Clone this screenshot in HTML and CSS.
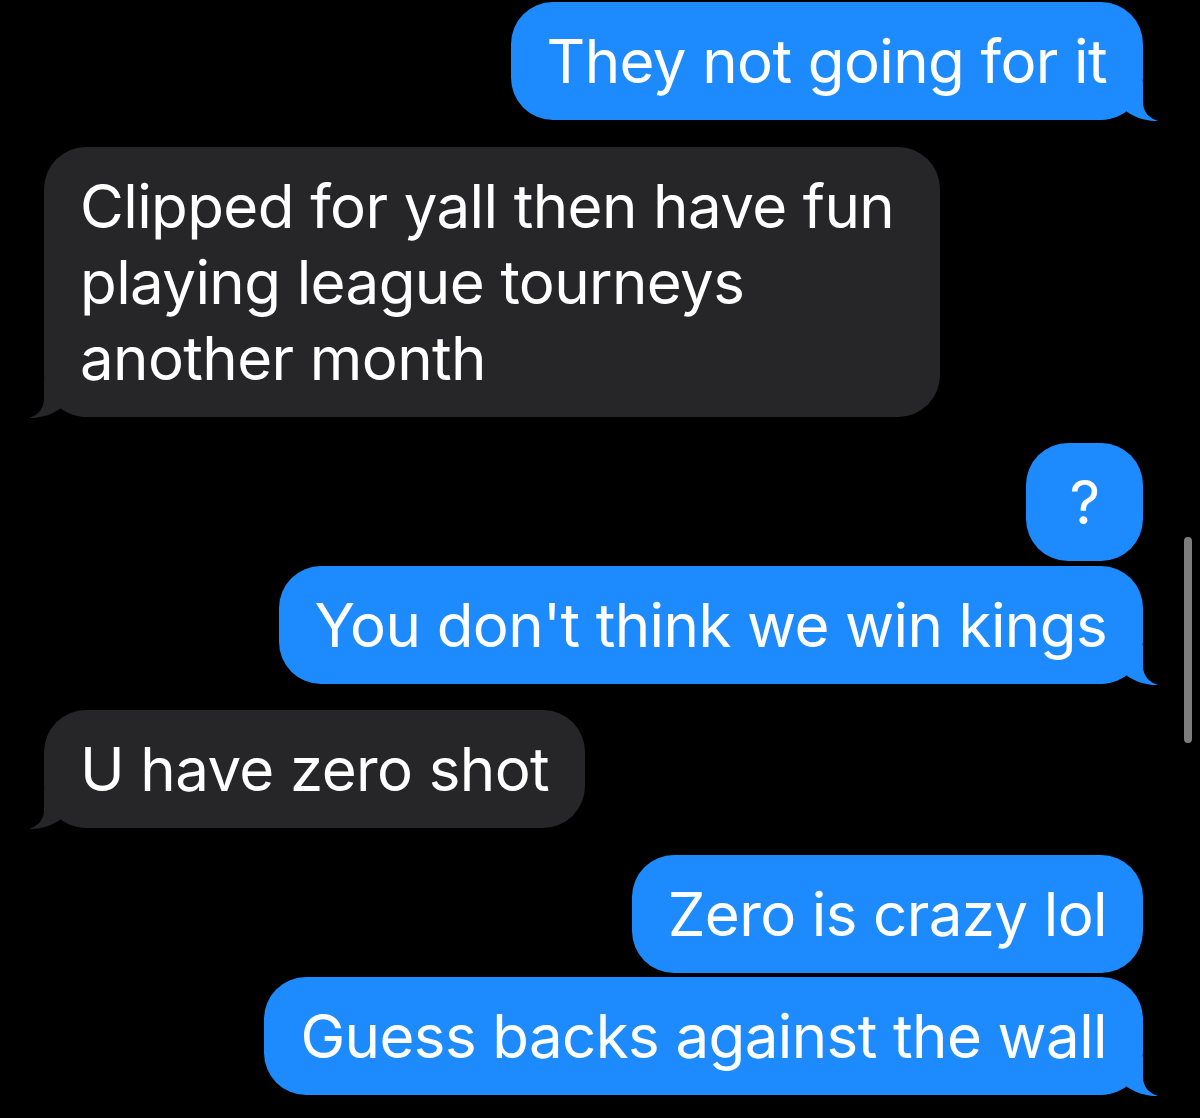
FILE: index.html
```html
<!DOCTYPE html>
<html>
<head>
<meta charset="utf-8">
<link rel="stylesheet" href="styles.css">
</head>
<body>
<div class="thread">
  <div class="row me">
    <div class="bubble">They not going for it<svg class="tail" viewBox="0 0 60 40"><path d="M45 0 L45 21 C45 31 51 37 60 40 C50 40.5 37 37 28 30 C20 36 10 39 0 39 Z"/></svg></div>
  </div>
  <div class="row them">
    <div class="bubble wide">Clipped for yall then have fun playing league tourneys another month<svg class="tail" viewBox="0 0 60 40"><path d="M45 0 L45 21 C45 31 51 37 60 40 C50 40.5 37 37 28 30 C20 36 10 39 0 39 Z"/></svg></div>
  </div>
  <div class="row me">
    <div class="bubble short">?</div>
  </div>
  <div class="row me same">
    <div class="bubble">You don't think we win kings<svg class="tail" viewBox="0 0 60 40"><path d="M45 0 L45 21 C45 31 51 37 60 40 C50 40.5 37 37 28 30 C20 36 10 39 0 39 Z"/></svg></div>
  </div>
  <div class="row them">
    <div class="bubble">U have zero shot<svg class="tail" viewBox="0 0 60 40"><path d="M45 0 L45 21 C45 31 51 37 60 40 C50 40.5 37 37 28 30 C20 36 10 39 0 39 Z"/></svg></div>
  </div>
  <div class="row me">
    <div class="bubble">Zero is crazy lol</div>
  </div>
  <div class="row me same">
    <div class="bubble">Guess backs against the wall<svg class="tail" viewBox="0 0 60 40"><path d="M45 0 L45 21 C45 31 51 37 60 40 C50 40.5 37 37 28 30 C20 36 10 39 0 39 Z"/></svg></div>
  </div>
</div>
<div class="scrollbar"></div>
</body>
</html>
```
FILE: styles.css
```css
html, body {
  margin: 0;
  padding: 0;
  background: #000;
}
body {
  width: 1200px;
  height: 1118px;
  overflow: hidden;
  position: relative;
  font-family: Inter, "Noto Sans", sans-serif;
}
.thread {
  display: flex;
  flex-direction: column;
  padding-top: 2px;
}
.row {
  display: flex;
  margin-top: 26.5px;
}
.row:first-child { margin-top: 0; }
.row.same { margin-top: 4.5px; }
.row.me {
  justify-content: flex-end;
  padding-right: 57px;
}
.row.them {
  justify-content: flex-start;
  padding-left: 44px;
}
.bubble {
  position: relative;
  box-sizing: border-box;
  padding: 21px 36px;
  border-radius: 42px;
  font-size: 60px;
  line-height: 76px;
  color: #fff;
  letter-spacing: -0.6px;
}
.me .bubble { background: #1d8bfd; }
.them .bubble { background: #262628; }
.bubble.wide { max-width: 896px; width: 896px; }
.bubble.short { min-width: 117px; text-align: center; padding-left: 0; padding-right: 0; }
.tail {
  position: absolute;
  bottom: -1px;
  width: 60px;
  height: 40px;
}
.me .tail { right: -15px; }
.me .tail path { fill: #1d8bfd; }
.them .tail { left: -15px; transform: scaleX(-1); }
.them .tail path { fill: #262628; }
.scrollbar {
  position: absolute;
  left: 1184px;
  top: 537px;
  width: 8px;
  height: 206px;
  border-radius: 4px;
  background: #7d7d7d;
}
```
